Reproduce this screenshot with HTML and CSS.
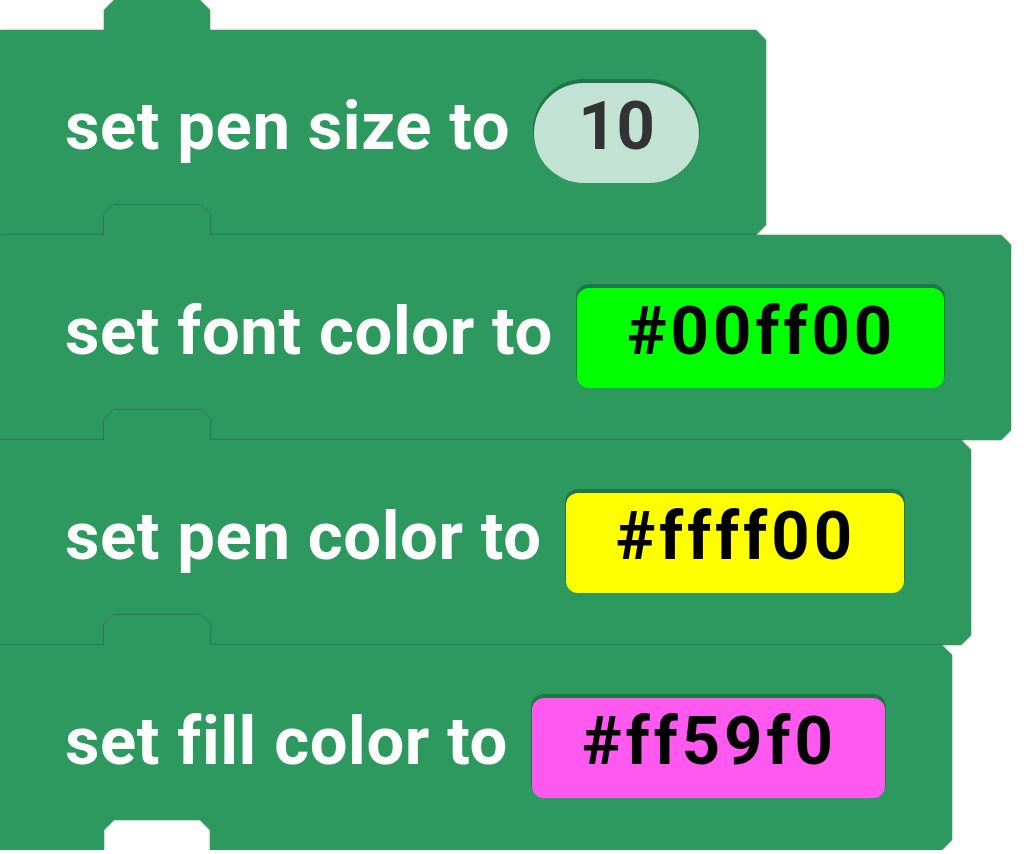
FILE: index.html
```html
<!DOCTYPE html>
<html lang="en">
<head>
    <meta charset="UTF-8">
    <meta name="viewport" content="width=device-width, initial-scale=1.0">
    <title>Pen blocks</title>
    <link rel="stylesheet" href="styles.css">
</head>
<body>
    <div class="stack">
        <div class="block">
            <div class="block-body">
                <span class="label">set pen size to</span>
                <span class="field field-number">10</span>
            </div>
        </div>
        <div class="block">
            <div class="block-body">
                <span class="label">set font color to</span>
                <span class="field field-color" style="background: #00ff00;">#00ff00</span>
            </div>
        </div>
        <div class="block">
            <div class="block-body">
                <span class="label">set pen color to</span>
                <span class="field field-color" style="background: #ffff00;">#ffff00</span>
            </div>
        </div>
        <div class="block">
            <div class="block-body">
                <span class="label">set fill color to</span>
                <span class="field field-color" style="background: #ff59f0;">#ff59f0</span>
            </div>
        </div>
    </div>
</body>
</html>
```

FILE: styles.css
```css
body {
    margin: 0;
    padding: 0;
    background: #fff;
    font-family: Roboto, 'Liberation Sans', sans-serif;
}

.stack {
    display: flex;
    flex-direction: column;
    align-items: flex-start;
}

.block {
    filter: drop-shadow(0 0 1px rgba(0, 0, 0, 0.45));
}

.block + .block {
    margin-top: -30px;
}

/* tab on top, matching notch cut out of the bottom */
.block-body {
    box-sizing: border-box;
    height: 235px;
    padding: 30px 67px 0 65px;
    display: flex;
    align-items: center;
    gap: 24px;
    background: #2d995f;
    clip-path: polygon(
        0 30px, 104px 30px, 104px 10px, 114px 0, 200px 0, 210px 10px, 210px 30px,
        calc(100% - 10px) 30px, 100% 40px,
        100% calc(100% - 10px), calc(100% - 10px) 100%,
        210px 100%, 210px calc(100% - 20px), 200px calc(100% - 30px),
        114px calc(100% - 30px), 104px calc(100% - 20px), 104px 100%,
        0 100%
    );
}

.label {
    padding-bottom: 13px;
    color: #fff;
    font-size: 67px;
    font-weight: 700;
    line-height: 1;
    letter-spacing: 0.6px;
    font-variant-ligatures: none;
    white-space: nowrap;
}

.field {
    box-sizing: border-box;
    height: 100px;
    padding-bottom: 13px;
    display: flex;
    align-items: center;
    justify-content: center;
    font-size: 67px;
    font-weight: 700;
    line-height: 1;
    white-space: nowrap;
    box-shadow: 0 -3px 0 1px rgba(0, 40, 20, 0.3);
}

.field-number {
    padding-left: 44px;
    padding-right: 44px;
    border-radius: 50px;
    background: #c2e3d4;
    color: #333;
}

.field-color {
    padding-left: 50px;
    padding-right: 48px;
    border-radius: 12px;
    color: #000;
    letter-spacing: 4px;
    font-variant-ligatures: none;
}
```
